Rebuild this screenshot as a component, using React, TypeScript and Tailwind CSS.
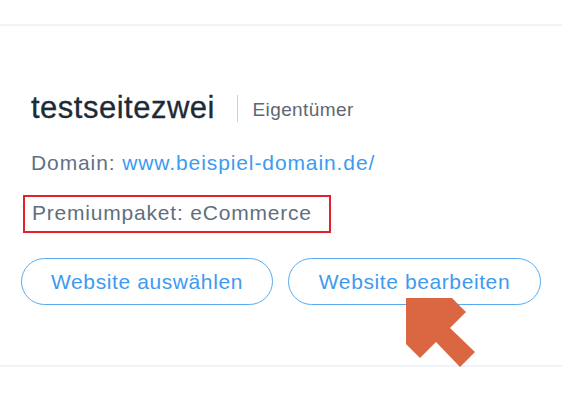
import React from "react"

function Arrow() {
    // annotation arrow drawn over the second button
    return <svg className="absolute left-[400px] top-[292px] w-[80px] h-[80px]" viewBox="400 292 80 80">
        <polygon
            points="406,298 452,298 466,312 450,328 475,352 460,367 436,342 420,358 406,344"
            fill="#db6642"
        />
    </svg>
}

function App() {
    return <div className="relative w-[580px] h-[419px] bg-white font-['Liberation_Sans',Arial,sans-serif] overflow-hidden">
        <div className="w-[562px] pt-6">
            <div className="h-[2px] bg-[#f0f3f7]"></div>
            <div className="pl-[21px] pt-[64px]">
                <div className="flex items-start pl-[10px]">
                    <h1 className="text-[31px] leading-[36px] tracking-[0.5px] text-[#1c2b36] [-webkit-text-stroke:0.3px_#1c2b36]">testseitezwei</h1>
                    <div className="w-[1.5px] h-[27px] mt-[5px] ml-[22px] mr-[14px] bg-[#c9d0d6]"></div>
                    <span className="text-[19px] leading-[36px] mt-[2px] tracking-[0.4px] text-[#5c6770]">Eigentümer</span>
                </div>
                <p className="pl-[10px] mt-[22px] text-[21px] leading-[25px] tracking-[0.9px] text-[#627182]">
                    Domain: <a className="text-[#3d9bef]">www.beispiel-domain.de/</a>
                </p>
                <div className="ml-[2px] mt-[20px] w-[308px] h-[38px] border-2 border-[#e3212b] pl-[7px] pt-[3px]">
                    <p className="text-[21px] leading-[25px] tracking-[0.8px] text-[#5f6f7d]">Premiumpaket: eCommerce</p>
                </div>
                <div className="flex gap-[15px] mt-[25px]">
                    <button className="w-[252px] h-[47px] rounded-full border-[1.5px] border-[#5aaaf0] text-[21px] tracking-[0.6px] text-[#3d9bef]">Website auswählen</button>
                    <button className="w-[253px] h-[47px] rounded-full border-[1.5px] border-[#5aaaf0] text-[21px] tracking-[0.6px] text-[#3d9bef]">Website bearbeiten</button>
                </div>
            </div>
            <div className="mt-[60px] h-[2px] bg-[#f0f4f8]"></div>
        </div>
        <Arrow />
    </div>
}

export default App
